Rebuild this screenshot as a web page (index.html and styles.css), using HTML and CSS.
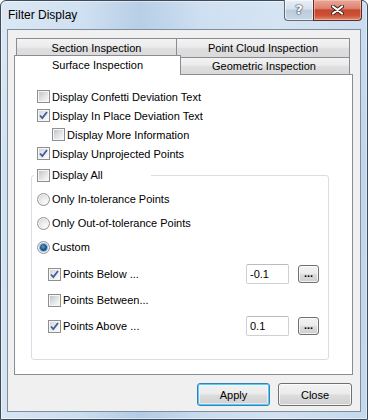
FILE: index.html
```html
<!DOCTYPE html>
<html>
<head>
<meta charset="utf-8">
<title>Filter Display</title>
<link rel="stylesheet" href="styles.css">
</head>
<body>
<div class="window">
  <div class="titlebar">
    <span class="title">Filter Display</span>
    <div class="caption-btns">
      <div class="cbtn help"><span class="qmark">?</span></div>
      <div class="cbtn close">
        <svg width="13" height="10" viewBox="0 0 13 10">
          <path d="M2 1.5 L11 8.5 M11 1.5 L2 8.5" stroke="#3b2420" stroke-width="4" stroke-linecap="round" fill="none"/>
          <path d="M2 1.5 L11 8.5 M11 1.5 L2 8.5" stroke="#ffffff" stroke-width="2.2" stroke-linecap="round" fill="none"/>
        </svg>
      </div>
    </div>
  </div>
  <div class="client">
    <div class="tabrow back">
      <div class="tab t-section">Section Inspection</div>
      <div class="tab t-cloud">Point Cloud Inspection</div>
    </div>
    <div class="tabrow front">
      <div class="tab sel">Surface Inspection</div>
      <div class="tab t-geo">Geometric Inspection</div>
    </div>
    <div class="panel">
      <div class="row top"><span class="cb"></span><span>Display Confetti Deviation Text</span></div>
      <div class="row top"><span class="cb checked"><svg width="11" height="11" viewBox="0 0 11 11"><path d="M2 5.5 L4.3 8 L9 2" stroke="#3f5d9c" stroke-width="1.8" fill="none"/></svg></span><span>Display In Place Deviation Text</span></div>
      <div class="row top indent"><span class="cb"></span><span>Display More Information</span></div>
      <div class="row top"><span class="cb checked"><svg width="11" height="11" viewBox="0 0 11 11"><path d="M2 5.5 L4.3 8 L9 2" stroke="#3f5d9c" stroke-width="1.8" fill="none"/></svg></span><span>Display Unprojected Points</span></div>
      <div class="group">
        <div class="legend"><span class="cb"></span><span>Display All</span></div>
        <div class="rrow first"><span class="rb"></span><span>Only In-tolerance Points</span></div>
        <div class="rrow"><span class="rb"></span><span>Only Out-of-tolerance Points</span></div>
        <div class="rrow"><span class="rb on"><span class="dot"></span></span><span>Custom</span></div>
        <div class="prow first">
          <span class="cb checked"><svg width="11" height="11" viewBox="0 0 11 11"><path d="M2 5.5 L4.3 8 L9 2" stroke="#3f5d9c" stroke-width="1.8" fill="none"/></svg></span>
          <span class="plabel">Points Below ...</span>
          <span class="num">-0.1</span>
          <span class="dots">...</span>
        </div>
        <div class="prow">
          <span class="cb"></span>
          <span class="plabel">Points Between...</span>
        </div>
        <div class="prow">
          <span class="cb checked"><svg width="11" height="11" viewBox="0 0 11 11"><path d="M2 5.5 L4.3 8 L9 2" stroke="#3f5d9c" stroke-width="1.8" fill="none"/></svg></span>
          <span class="plabel">Points Above ...</span>
          <span class="num">0.1</span>
          <span class="dots">...</span>
        </div>
      </div>
    </div>
    <div class="footer">
      <div class="btn default">Apply</div>
      <div class="btn">Close</div>
    </div>
  </div>
</div>
</body>
</html>
```
FILE: styles.css
```css
* { box-sizing: border-box; }
html, body { margin: 0; padding: 0; }
body {
  width: 368px;
  height: 420px;
  overflow: hidden;
  background: #ffffff;
  font-family: "Liberation Sans", Arial, sans-serif;
  font-size: 11px;
  color: #000;
}
.window {
  width: 368px;
  height: 420px;
  border: 1px solid #3d4b5a;
  border-radius: 6px 6px 0 0;
  display: flex;
  flex-direction: column;
  background:
    linear-gradient(to right, rgba(255,255,255,0.35) 0%, rgba(255,255,255,0.15) 22%, rgba(110,150,195,0.18) 38%, rgba(255,255,255,0.12) 55%, rgba(255,255,255,0.25) 75%, rgba(255,255,255,0.05) 100%),
    linear-gradient(#c9dcef, #bcd3ea 40%, #c2d7ec);
  box-shadow: inset 0 0 0 1px rgba(255,255,255,0.45);
}
.titlebar {
  height: 28px;
  display: flex;
  align-items: flex-start;
  padding-left: 7px;
  padding-right: 5px;
}
.title {
  font-size: 12px;
  line-height: 14px;
  margin-top: 7px;
  color: #000;
}
.caption-btns {
  margin-left: auto;
  display: flex;
  margin-top: -1px;
}
.cbtn {
  height: 21px;
  display: flex;
  align-items: center;
  justify-content: center;
  border: 1px solid #5e6c7c;
  border-top: none;
}
.help {
  width: 29px;
  border-right: none;
  border-radius: 0 0 0 4px;
  background: linear-gradient(#e7eef6 0%, #d6e1ed 45%, #bccbdb 52%, #c9d6e4 100%);
  box-shadow: inset 0 0 0 1px rgba(255,255,255,0.55);
}
.qmark {
  font-family: "DejaVu Sans", sans-serif;
  font-weight: bold;
  font-size: 13px;
  color: #fff;
  text-shadow: 0 0 1px #3a4654, 0 0 1px #3a4654, 0 0 2px #3a4654;
  margin-top: -1px;
}
.close {
  width: 49px;
  border-color: #5a2c24;
  border-radius: 0 0 4px 0;
  background: linear-gradient(#eaa898 0%, #dc8371 42%, #c8452e 50%, #cd5238 78%, #e08c70 100%);
  box-shadow: inset 0 0 0 1px rgba(255,210,200,0.5);
}
.client {
  margin: 0 6px;
  height: 383px;
  border: 1px solid #7f8e9f;
  background: #f0f0f0;
  padding: 8px 7px 0 6px;
}
.tabrow {
  display: flex;
  margin-left: 2px;
  width: 334px;
}
.back { height: 19px; }
.front { height: 17px; }
.tab {
  border: 1px solid #898c95;
  border-bottom: none;
  background: linear-gradient(#f3f3f3 0%, #ebebeb 45%, #dedede 55%, #dadada 100%);
  display: flex;
  align-items: center;
  justify-content: center;
  white-space: nowrap;
}
.t-section { width: 161px; }
.t-cloud { width: 174px; margin-left: -1px; }
.sel {
  width: 167px;
  height: 20px;
  margin: -2px -2px 0 -2px;
  background: #ffffff;
  position: relative;
  z-index: 2;
  padding-bottom: 1px;
}
.t-geo { width: 172px; margin-left: -1px; }
.panel {
  width: 339px;
  height: 301px;
  border: 1px solid #898c95;
  background: #ffffff;
  padding: 12px 0 0 16px;
}
.row {
  display: flex;
  align-items: center;
  gap: 2px;
  height: 19px;
  white-space: nowrap;
}
.row.top { margin-left: 6px; }
.row.indent { margin-left: 21px; }
.cb {
  width: 13px;
  height: 13px;
  flex: none;
  border: 1px solid #8e8f8f;
  background: linear-gradient(135deg, #b9bec4 0%, #dcdee1 45%, #f3f3f4 80%, #fbfbfb 100%);
  box-shadow: inset 0 0 0 1px #f6f6f6;
  display: flex;
  align-items: center;
  justify-content: center;
}
.cb.checked {
  background: linear-gradient(135deg, #cfd3d8 0%, #e6e8ea 45%, #f6f6f7 80%, #fcfcfc 100%);
}
.group {
  width: 298px;
  margin-top: 12px;
  border: 1px solid #d5dfe5;
  border-radius: 3px;
  padding: 0 9px 20px 5px;
}
.legend {
  display: flex;
  align-items: center;
  gap: 2px;
  height: 14px;
  width: 117px;
  margin-top: -8px;
  margin-left: -3px;
  padding-left: 3px;
  background: #ffffff;
}
.rrow {
  display: flex;
  align-items: center;
  gap: 2px;
  height: 24px;
}
.rrow.first { margin-top: 5px; }
.rb {
  width: 13px;
  height: 13px;
  flex: none;
  border-radius: 50%;
  border: 1px solid #949494;
  background: radial-gradient(circle at 65% 70%, #fbfbfb 0%, #e8e8e8 45%, #c6c9cd 100%);
  box-shadow: inset 0 0 0 1px #f4f4f4;
  display: flex;
  align-items: center;
  justify-content: center;
}
.rb.on {
  background: radial-gradient(circle at 50% 50%, #f4f7fa 0%, #e2e6ea 100%);
}
.dot {
  width: 7px;
  height: 7px;
  border-radius: 50%;
  background: radial-gradient(circle at 45% 40%, #5fa3d6 0%, #1f5a8e 45%, #0e3760 100%);
  box-shadow: 0 0 0 1px #8fb6d8;
}
.prow {
  display: flex;
  align-items: center;
  height: 26px;
  padding-left: 11px;
}
.prow.first { margin-top: 2px; }
.plabel {
  flex: 1;
  margin-left: 2px;
  white-space: nowrap;
}
.num {
  width: 43px;
  height: 20px;
  border: 1px solid #cdd1d7;
  border-top-color: #b7bbc2;
  border-radius: 2px;
  background: #fff;
  padding-left: 3px;
  display: flex;
  align-items: center;
  flex: none;
}
.dots {
  width: 21px;
  height: 18px;
  margin-left: 9px;
  flex: none;
  border: 1px solid #707070;
  border-radius: 3px;
  background: linear-gradient(#f2f2f2 0%, #ebebeb 48%, #dddddd 52%, #cfcfcf 100%);
  box-shadow: inset 0 0 0 1px rgba(255,255,255,0.7);
  display: flex;
  align-items: flex-end;
  justify-content: center;
  font-weight: bold;
  line-height: 13px;
  padding-bottom: 2px;
}
.footer {
  display: flex;
  justify-content: flex-end;
  gap: 8px;
  margin-top: 8px;
  padding-right: 1px;
}
.btn {
  width: 74px;
  height: 23px;
  border: 1px solid #707070;
  border-radius: 3px;
  background: linear-gradient(#f2f2f2 0%, #ebebeb 48%, #dddddd 52%, #cfcfcf 100%);
  box-shadow: inset 0 0 0 1px rgba(255,255,255,0.75);
  display: flex;
  align-items: center;
  justify-content: center;
}
.btn.default {
  width: 73px;
  border-color: #3c7fb1;
  background: linear-gradient(#eaf6fd 0%, #d9f0fc 48%, #bee6fd 52%, #a7d9f5 100%);
  box-shadow: inset 0 0 0 1px #48d1ff, inset 0 0 0 2px rgba(255,255,255,0.5);
  background: linear-gradient(#f2f2f2 0%, #ebebeb 48%, #dddddd 52%, #cfcfcf 100%);
}
```
